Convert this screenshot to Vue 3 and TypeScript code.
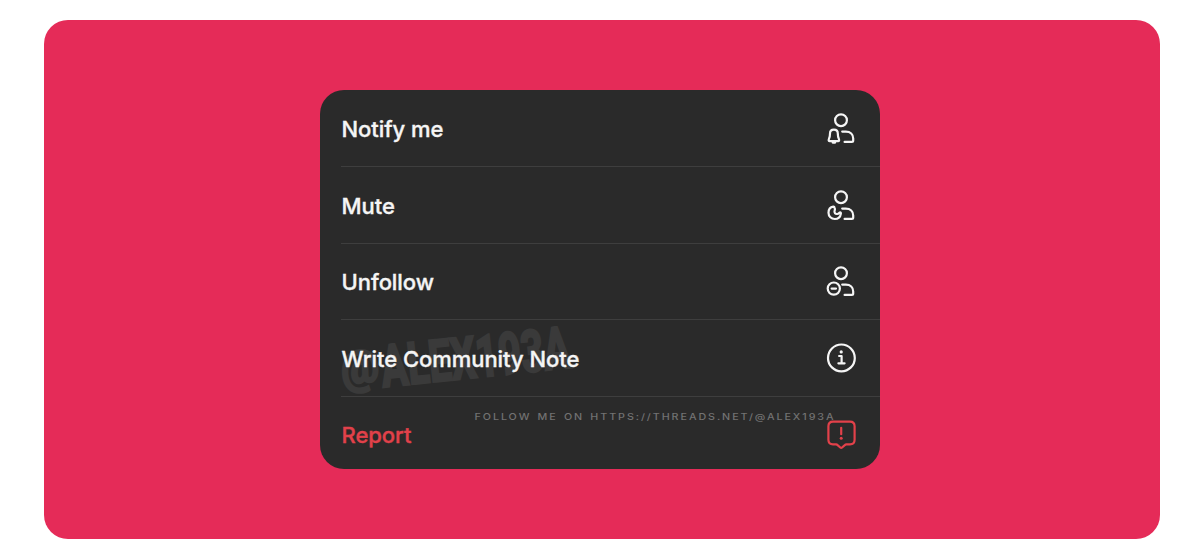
<script setup lang="ts">
type IconName = 'bell' | 'moon' | 'minus' | 'info' | 'report'

interface MenuItem {
  label: string
  icon: IconName
  danger?: boolean
}

const items: MenuItem[] = [
  { label: 'Notify me', icon: 'bell' },
  { label: 'Mute', icon: 'moon' },
  { label: 'Unfollow', icon: 'minus' },
  { label: 'Write Community Note', icon: 'info' },
  { label: 'Report', icon: 'report', danger: true },
]

const isPerson = (icon: IconName): boolean => ['bell', 'moon', 'minus'].includes(icon)
</script>

<template>
  <main class="page">
    <section class="stage">
      <div class="menu">
        <svg class="watermark" viewBox="0 0 560 379" aria-hidden="true">
          <g transform="translate(64 297) rotate(-6)">
            <text class="mark at" x="-41" y="-7" textLength="38" lengthAdjust="spacingAndGlyphs">@</text>
            <text class="mark" x="-1" y="0" textLength="190" lengthAdjust="spacingAndGlyphs">ALEX193A</text>
          </g>
          <text class="credit" x="154.5" y="329.5" textLength="361" lengthAdjust="spacingAndGlyphs">FOLLOW ME ON HTTPS://THREADS.NET/@ALEX193A</text>
        </svg>
        <ul class="list">
          <li v-for="item in items" :key="item.label" class="item" :class="{ danger: item.danger }">
            <span class="label">{{ item.label }}</span>
            <svg class="icon" viewBox="0 0 36 36" aria-hidden="true">
              <template v-if="isPerson(item.icon)">
                <circle cx="18" cy="10.2" r="5.9" />
                <path d="M19.2 21.6H22.8C27.4 21.6 30.2 24.4 30.2 28.6V30.5Q30.2 31.9 28.8 31.9H21.6" />
              </template>
              <path v-if="item.icon === 'bell'" d="M10.9 19.6C8.5 19.6 7 21.3 7 23.5C7 26.4 6.8 27.4 5.9 29.1C5.4 30.2 5.7 31.1 6.7 31.1H15.1C16.1 31.1 16.4 30.2 15.9 29.1C15 27.4 14.8 26.4 14.8 23.5C14.8 21.3 13.3 19.6 10.9 19.6ZM9.7 32.6H12.1" />
              <path v-if="item.icon === 'moon'" d="M10.3 19.7C7.5 20.2 5.5 22.7 5.5 25.8C5.5 29.4 8.3 32 11.8 32C15 32 17.4 29.8 17.9 26.6C18.1 25.4 17.2 24.9 16.4 25.7C14.9 27.4 12.9 27.3 12 26.3C10.9 25.1 11.5 24.1 11.8 23C12.1 22.2 11.9 21.8 11.7 21.1C11.5 20.2 11.2 19.6 10.3 19.7Z" />
              <template v-if="item.icon === 'minus'">
                <circle cx="10.8" cy="25.6" r="6.1" />
                <path d="M8.6 25.6H13" />
              </template>
              <template v-if="item.icon === 'info'">
                <circle cx="18.4" cy="17.9" r="13.4" />
                <path d="M16.1 16H18.6V23.3M15.4 23.3H21.6" />
                <circle class="dot" cx="18.2" cy="11.9" r="1.6" />
              </template>
              <template v-if="item.icon === 'report'">
                <path d="M10 4.7H27Q31.6 4.7 31.6 9.3V22.8Q31.6 27.4 27 27.4H23.3Q22.5 27.4 21.8 28.1L19.1 30.5Q18.2 31.3 17.3 30.5L14.6 28.1Q13.9 27.4 13.1 27.4H10Q5.4 27.4 5.4 22.8V9.3Q5.4 4.7 10 4.7Z" />
                <path d="M18.2 10.8V17.2" />
                <circle class="dot" cx="18.2" cy="21.3" r="1.5" />
              </template>
            </svg>
          </li>
        </ul>
      </div>
    </section>
  </main>
</template>

<style>
body {
  background: #fff;
}
</style>

<style scoped>
.page {
  box-sizing: border-box;
  height: 559px;
  padding: 20px 40px 20px 44px;
}

.stage {
  box-sizing: border-box;
  height: 519px;
  padding: 70px 0 0 276px;
  border-radius: 24px;
  background: #e52b58;
}

.menu {
  position: relative;
  width: 560px;
  height: 379px;
  overflow: hidden;
  border-radius: 24px;
  background: #2a2a2a;
}

.watermark {
  position: absolute;
  inset: 0;
  width: 560px;
  height: 379px;
}

.mark {
  fill: #3a3a3a;
  stroke: #3a3a3a;
  stroke-width: 2.6;
  font: 700 58px Roboto, sans-serif;
}

.at {
  font-size: 46px;
}

.credit {
  fill: #727272;
  font: 500 8.8px Inter, sans-serif;
  letter-spacing: 1.6px;
  word-spacing: 1.2px;
}

.list {
  position: relative;
  margin: 0;
  padding: 0.5px 0 0 21px;
  list-style: none;
}

.item {
  box-sizing: border-box;
  display: flex;
  align-items: center;
  justify-content: space-between;
  height: 76.6px;
  padding: 0 21px 0 0.5px;
  border-bottom: 1px solid #3e3e3e;
  color: #f5f5f5;
}

.item:last-child {
  border-bottom-color: transparent;
}

.danger {
  color: #e2414a;
}

.label {
  padding-top: 1.6px;
  font: 500 22px/28px Inter, sans-serif;
  letter-spacing: -0.05px;
  -webkit-text-stroke: 0.35px currentColor;
}

.icon {
  width: 36px;
  height: 36px;
  fill: none;
  stroke: currentColor;
  stroke-width: 2.2;
  stroke-linecap: round;
  stroke-linejoin: round;
}

.dot {
  fill: currentColor;
  stroke: none;
}
</style>
